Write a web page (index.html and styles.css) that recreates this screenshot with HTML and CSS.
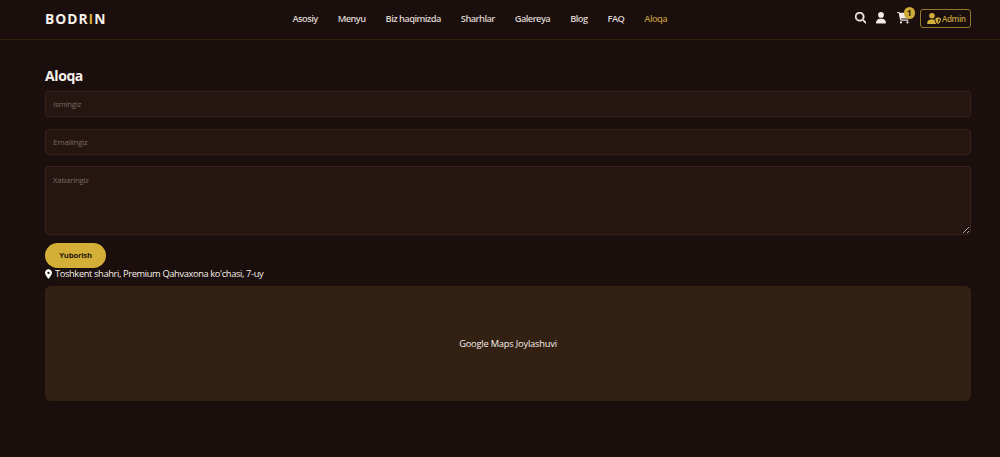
FILE: index.html
```html
<!DOCTYPE html>
<html lang="uz">
<head>
<meta charset="utf-8">
<title>Bodrin - Aloqa</title>
<link rel="stylesheet" href="styles.css">
</head>
<body>
<header class="header">
  <a class="logo">BODR<span class="gold">I</span>N</a>
  <nav class="nav">
    <a>Asosiy</a><a>Menyu</a><a>Biz haqimizda</a><a>Sharhlar</a><a>Galereya</a><a>Blog</a><a>FAQ</a><a class="active">Aloqa</a>
  </nav>
  <div class="actions">
    <svg class="icon search" viewBox="0 0 512 512"><path d="M416 208c0 45.900-14.900 88.300-40 122.700L502.600 457.400c12.500 12.500 12.500 32.800 0 45.300s-32.800 12.500-45.300 0L330.700 376c-34.400 25.200-76.800 40-122.700 40C93.100 416 0 322.900 0 208S93.100 0 208 0S416 93.100 416 208zM208 352a144 144 0 1 0 0-288 144 144 0 1 0 0 288z"/></svg>
    <svg class="icon user" viewBox="0 0 448 512"><path d="M224 256A128 128 0 1 0 224 0a128 128 0 1 0 0 256zm-45.700 48C79.800 304 0 383.800 0 482.300C0 498.700 13.300 512 29.700 512H418.300c16.400 0 29.700-13.300 29.700-29.700C448 383.800 368.200 304 269.700 304H178.300z"/></svg>
    <span class="cart">
      <svg class="icon" viewBox="0 0 576 512"><path d="M0 24C0 10.700 10.700 0 24 0H69.500c22 0 41.500 12.800 50.600 32h411c26.300 0 45.500 25 38.600 50.400l-41 152.300c-8.500 31.400-37 53.300-69.500 53.300H170.700l5.400 28.500c2.200 11.300 12.100 19.500 23.600 19.500H488c13.300 0 24 10.700 24 24s-10.700 24-24 24H199.700c-34.600 0-64.300-24.600-70.700-58.500L77.400 54.500c-.7-3.800-4-6.500-7.900-6.500H24C10.700 48 0 37.300 0 24zM128 464a48 48 0 1 1 96 0 48 48 0 1 1-96 0zm336-48a48 48 0 1 1 0 96 48 48 0 1 1 0-96z"/></svg>
      <span class="badge">1</span>
    </span>
    <a class="admin">
      <svg viewBox="0 0 640 512"><path d="M224 256A128 128 0 1 0 224 0a128 128 0 1 0 0 256zM178.300 304C79.800 304 0 383.800 0 482.300C0 498.700 13.300 512 29.700 512H418.300c6.800 0 13.100-2.300 18.100-6.200C377 462 352 400 352 330c0-7 1-14 4-20c-25-5-55-6-86.300-6H178.300z"/><path fill-rule="evenodd" d="M512 200l117 47c7 3 11 9 11 17c0 95-32 195-128 248c-96-53-128-153-128-248c0-8 4-14 11-17L512 200zm0 62v188c45-30 68-82 71-160L512 262z"/></svg>
      <span>Admin</span>
    </a>
  </div>
</header>
<main class="contact">
  <h2 class="title">Aloqa</h2>
  <form class="form">
    <input class="field" type="text" placeholder="Ismingiz">
    <input class="field" type="email" placeholder="Emailingiz">
    <textarea class="field message" placeholder="Xabaringiz"></textarea>
    <button class="submit" type="button">Yuborish</button>
  </form>
  <p class="address">
    <svg viewBox="0 0 384 512"><path d="M215.700 499.200C267 435 384 279.400 384 192C384 86 298 0 192 0S0 86 0 192c0 87.400 117 243 168.300 307.200c12.300 15.300 35.100 15.300 47.400 0zM192 128a64 64 0 1 1 0 128 64 64 0 1 1 0-128z"/></svg>
    <span>Toshkent shahri, Premium Qahvaxona ko'chasi, 7-uy</span>
  </p>
  <div class="map"><span>Google Maps Joylashuvi</span></div>
</main>
</body>
</html>
```
FILE: styles.css
```css
* { box-sizing: border-box; }
body {
  margin: 0;
  height: 457px;
  background: #1a0f0c;
  color: #f8f0ea;
  font: 9.3px/14px "Segoe UI", "Open Sans", "Noto Sans", sans-serif;
}
.header {
  display: grid;
  grid-template-columns: 247.500px 1fr auto;
  align-items: center;
  height: 40px;
  padding: 0 29px 3px 45px;
  border-bottom: 1px solid #35210f;
}
.logo { padding-top: 1px; font-size: 13.8px; font-weight: 700; letter-spacing: 1px; }
.gold { color: #d4af37; }
.nav { display: flex; gap: 20px; font-weight: 600; letter-spacing: -0.55px; color: #ddd2ce; padding-top: 2px; white-space: nowrap; }
.active { color: #b98f3e; }
.actions { display: flex; align-items: center; }
.icon { display: block; height: 11.5px; fill: #f5ebe8; }
.search { width: 11.5px; margin-right: 10px; stroke: #f5ebe8; stroke-width: 18; }
.user { width: 10px; margin-right: 11px; }
.cart { position: relative; margin-right: 10px; }
.cart .icon { width: 13px; }
.badge {
  position: absolute;
  top: -5px;
  right: -5px;
  width: 11.5px;
  height: 11.5px;
  border-radius: 50%;
  background: #cfab38;
  color: #1a0f0c;
  font-size: 8px;
  font-weight: 700;
  line-height: 11px;
  text-align: center;
}
.admin {
  display: flex;
  align-items: center;
  gap: 1px;
  width: 51px;
  height: 19px;
  padding-left: 6px;
  border: 1px solid #957a2c;
  border-radius: 3px;
  color: #c09c3a;
  font-size: 8.2px;
  font-weight: 600;
  letter-spacing: -0.45px;
}
.admin span { padding-top: 1px; }
.admin svg { width: 14px; height: 11px; fill: #d4af37; }
.contact { padding: 27px 29px 0 45px; }
.title { margin: 0 0 6px; font-size: 14px; line-height: 18px; font-weight: 700; letter-spacing: -0.4px; }
.form { display: flex; flex-direction: column; align-items: flex-start; }
.field {
  display: block;
  width: 100%;
  height: 26px;
  margin: 0 0 11.5px;
  padding: 0 7px;
  border: 1px solid #38211a;
  border-radius: 3px;
  background: #261611;
  color: #f8f0ea;
  font: 7.8px/12px "Segoe UI", "Open Sans", "Noto Sans", sans-serif;
  letter-spacing: -0.2px;
  outline: none;
}
.field::placeholder { color: #796b66; opacity: 1; }
.message { height: 69px; margin-bottom: 7.500px; padding-top: 7px; resize: vertical; }
.submit {
  width: 61px;
  height: 25px;
  padding: 0;
  border: 0;
  border-radius: 13px;
  background: #d4af37;
  color: #2b1a0c;
  font: 700 7.8px/12px "Segoe UI", "Open Sans", "Noto Sans", sans-serif;
  letter-spacing: -0.25px;
}
.address { display: flex; align-items: center; gap: 3px; height: 13px; margin: 0 0 5px; letter-spacing: -0.37px; }
.address svg { width: 7px; height: 10px; fill: #fff; }
.map {
  display: flex;
  align-items: center;
  justify-content: center;
  height: 115px;
  padding-top: 1px;
  border-radius: 6px;
  background: #322112;
  letter-spacing: -0.2px;
}
```
